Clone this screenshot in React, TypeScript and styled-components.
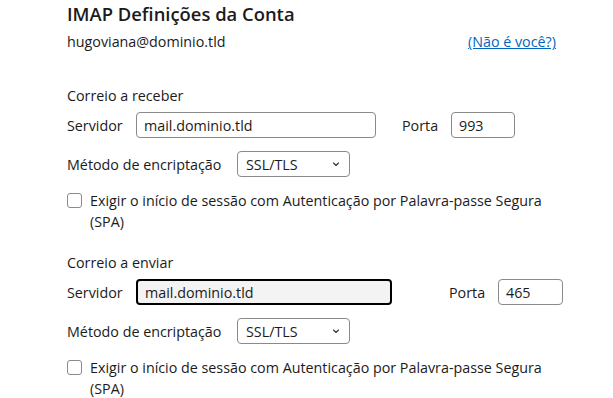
import styled, { createGlobalStyle } from "styled-components"

const GlobalStyle = createGlobalStyle`
  body {
    margin: 0;
    background: #ffffff;
    color: #1b1b1b;
    font-family: "Open Sans", "Noto Sans", sans-serif;
    font-size: 14.3px;
  }
`

interface SectionProps {
  title: string
  port: string
  serverWidth: number
  portGap: number
  portWidth: number
  focused?: boolean
}

const Chevron = () => (
  <svg width="10" height="10" viewBox="0 0 10 10">
    <path d="M2.5 4 L5 6.5 L7.5 4" fill="none" stroke="#333" strokeWidth="1.1" strokeLinecap="round" strokeLinejoin="round" />
  </svg>
)

const ServerSection = ({ title, port, serverWidth, portGap, portWidth, focused }: SectionProps) => (
  <Section>
    <SectionTitle>{title}</SectionTitle>
    <FieldRow>
      <ServerLabel>Servidor</ServerLabel>
      <TextBox $width={serverWidth} $focused={!!focused} defaultValue="mail.dominio.tld" />
      <PortLabel $gap={portGap}>Porta</PortLabel>
      <TextBox $width={portWidth} $focused={false} defaultValue={port} />
    </FieldRow>
    <MethodRow>
      <MethodLabel>Método de encriptação</MethodLabel>
      <SelectBox>
        <span>SSL/TLS</span>
        <Chevron />
      </SelectBox>
    </MethodRow>
    <CheckRow>
      <Box />
      <CheckText>
        Exigir o início de sessão com Autenticação por Palavra-passe Segura
        (SPA)
      </CheckText>
    </CheckRow>
  </Section>
)

export default function App() {
  return (
    <>
      <GlobalStyle />
      <Page>
        <Title>IMAP Definições da Conta</Title>
        <AccountRow>
          <span>hugoviana@dominio.tld</span>
          <Link href="#">(Não é você?)</Link>
        </AccountRow>
        <ServerSection title="Correio a receber" port="993" serverWidth={240} portGap={26} portWidth={64} />
        <ServerSection title="Correio a enviar" port="465" serverWidth={256} portGap={57} portWidth={65} focused />
      </Page>
    </>
  )
}

const Page = styled.div`
  width: 613px;
  box-sizing: border-box;
  padding: 0 0 0 67px;
`

const Title = styled.h1`
  margin: 0;
  font-size: 18.4px;
  font-weight: 600;
  line-height: 28px;
`

const AccountRow = styled.div`
  margin: 4px 57px 0 0;
  display: flex;
  justify-content: space-between;
  line-height: 20px;
`

const Link = styled.a`
  color: #0067c0;
  text-decoration: underline;
`

const Section = styled.section`
  margin-top: 34px;

  & + & {
    margin-top: 21px;
  }
`

const SectionTitle = styled.div`
  line-height: 20px;
`

const FieldRow = styled.div`
  margin-top: 6px;
  display: flex;
  align-items: center;
  height: 26px;
`

const ServerLabel = styled.span`
  flex: none;
  width: 69px;
`

const PortLabel = styled.span<{ $gap: number }>`
  flex: none;
  margin-left: ${(p) => p.$gap}px;
  width: 49px;
`

const TextBox = styled.input<{ $width: number; $focused: boolean }>`
  flex: none;
  box-sizing: border-box;
  width: ${(p) => p.$width}px;
  height: 26px;
  padding: 0 7px;
  font: inherit;
  color: #1b1b1b;
  border: ${(p) => (p.$focused ? "2px solid #000" : "1px solid #8a8a8a")};
  border-radius: 4px;
  background: ${(p) => (p.$focused ? "#f3f3f3" : "#fff")};
  outline: none;
`

const MethodRow = styled.div`
  margin-top: 13px;
  display: flex;
  align-items: center;
  height: 26px;
`

const MethodLabel = styled.span`
  flex: none;
  width: 170px;
`

const SelectBox = styled.div`
  flex: none;
  box-sizing: border-box;
  width: 113px;
  height: 26px;
  padding: 0 8px;
  display: flex;
  align-items: center;
  justify-content: space-between;
  border: 1px solid #8a8a8a;
  border-radius: 4px;
`

const CheckRow = styled.div`
  margin-top: 13px;
  display: flex;
  align-items: flex-start;
  gap: 8px;
`

const Box = styled.span`
  flex: none;
  box-sizing: border-box;
  width: 15px;
  height: 15px;
  margin-top: 3px;
  border: 1px solid #8a8a8a;
  border-radius: 3px;
`

const CheckText = styled.span`
  line-height: 21px;
  max-width: 470px;
`
